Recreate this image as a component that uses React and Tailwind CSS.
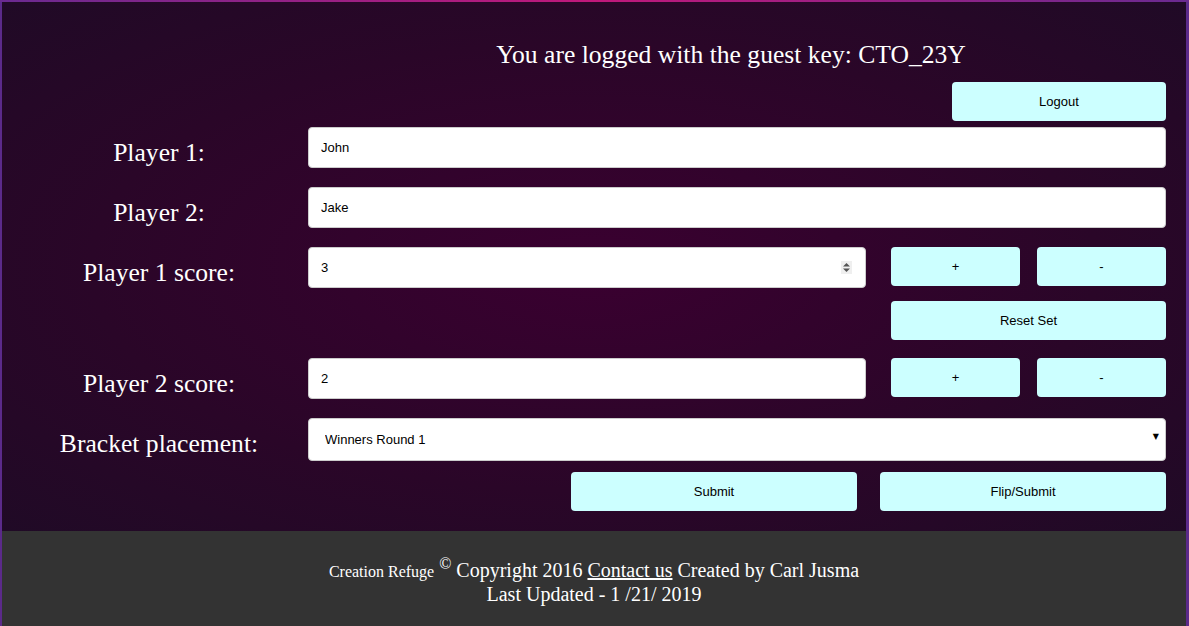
import React, { useState } from "react";

const btn =
  "h-[39px] rounded-[4px] bg-[#ccffff] text-[13px] text-black font-['Liberation_Sans',Arial,sans-serif]";
const field =
  "h-[41px] w-full rounded-[4px] border border-[#ccc] bg-white px-3 text-[13px] text-black font-['Liberation_Sans',Arial,sans-serif] outline-none";

const Label = ({ children }) => (
  <div className="flex w-[306px] shrink-0 justify-center pl-2 pt-[13px] text-[25.6px] leading-none text-white">
    {children}
  </div>
);

const App = () => {
  const [p1, setP1] = useState("John");
  const [p2, setP2] = useState("Jake");
  const [s1, setS1] = useState(3);
  const [s2, setS2] = useState(2);
  const [round, setRound] = useState("Winners Round 1");

  return (
    <div className="min-h-[626px] w-[1189px] font-['Liberation_Serif','Times_New_Roman',serif]">
      <div className="h-[2px] bg-[linear-gradient(90deg,#6a2a90_0%,#c0187a_50%,#6a2a90_100%)]" />
      <div className="border-l-2 border-r-[3px] border-[#5b2a8a]">
        <main className="bg-[radial-gradient(ellipse_at_center,#3a0030_0%,#2a0628_60%,#200a26_100%)] pb-5 pr-[20px]">
          <div className="flex">
            <div className="w-[306px] shrink-0" />
            <div className="flex flex-1 flex-col">
              <h1 className="pr-[12px] pt-[38px] text-center text-[25.6px] leading-[29px] text-white">
                You are logged with the guest key: CTO_23Y
              </h1>
              <div className="mt-[13px] flex justify-end">
                <button className={`${btn} w-[214px]`}>Logout</button>
              </div>
            </div>
          </div>

          <div className="mt-[6px] flex">
            <Label>Player 1:</Label>
            <input className={field} value={p1} onChange={(e) => setP1(e.target.value)} />
          </div>

          <div className="mt-[19px] flex">
            <Label>Player 2:</Label>
            <input className={field} value={p2} onChange={(e) => setP2(e.target.value)} />
          </div>

          <div className="mt-[19px] flex">
            <Label>Player 1 score:</Label>
            <div className="relative w-[558px] shrink-0">
              <input className={field} value={s1} onChange={(e) => setS1(e.target.value)} />
              <svg
                className="absolute right-[14px] top-[14px]"
                width="11"
                height="13"
                viewBox="0 0 11 13"
              >
                <rect width="11" height="13" fill="#efefef" />
                <path d="M5.5 2 L9 5.5 L2 5.5 Z" fill="#555" />
                <path d="M5.5 11 L9 7.5 L2 7.5 Z" fill="#555" />
              </svg>
            </div>
            <div className="ml-[25px] flex flex-1 flex-col">
              <div className="flex gap-[17px]">
                <button className={`${btn} flex-1`} onClick={() => setS1(Number(s1) + 1)}>
                  +
                </button>
                <button className={`${btn} flex-1`} onClick={() => setS1(Number(s1) - 1)}>
                  -
                </button>
              </div>
              <button
                className={`${btn} mt-[15px] w-full`}
                onClick={() => {
                  setS1(0);
                  setS2(0);
                }}
              >
                Reset Set
              </button>
            </div>
          </div>

          <div className="mt-[18px] flex">
            <Label>Player 2 score:</Label>
            <div className="w-[558px] shrink-0">
              <input className={field} value={s2} onChange={(e) => setS2(e.target.value)} />
            </div>
            <div className="ml-[25px] flex flex-1 gap-[17px]">
              <button className={`${btn} flex-1`} onClick={() => setS2(Number(s2) + 1)}>
                +
              </button>
              <button className={`${btn} flex-1`} onClick={() => setS2(Number(s2) - 1)}>
                -
              </button>
            </div>
          </div>

          <div className="mt-[19px] flex">
            <Label>Bracket placement:</Label>
            <div className="relative flex-1">
              <select
                className={`${field} h-[43px] appearance-none pl-4`}
                value={round}
                onChange={(e) => setRound(e.target.value)}
              >
                <option>Winners Round 1</option>
                <option>Winners Round 2</option>
                <option>Losers Round 1</option>
                <option>Grand Finals</option>
              </select>
              <span className="pointer-events-none absolute right-[7px] top-[15px] text-[8px] leading-none text-black font-['DejaVu_Sans',sans-serif]">
                ▼
              </span>
            </div>
          </div>

          <div className="mt-[11px] flex justify-end gap-[23px]">
            <button className={`${btn} w-[286px]`}>Submit</button>
            <button className={`${btn} w-[286px]`}>Flip/Submit</button>
          </div>
        </main>

        <footer className="h-[95px] bg-[#333333] pt-[28px] text-center text-white">
          <p className="text-[20px] leading-[23px]">
            <span className="text-[16px]">Creation Refuge</span>{" "}
            <sup className="text-[16px]">©</sup> Copyright 2016{" "}
            <a href="#" className="underline">
              Contact us
            </a>{" "}
            Created by Carl Jusma
          </p>
          <p className="text-[20px] leading-[23px]">Last Updated - 1 /21/ 2019</p>
        </footer>
      </div>
    </div>
  );
};

export default App;
